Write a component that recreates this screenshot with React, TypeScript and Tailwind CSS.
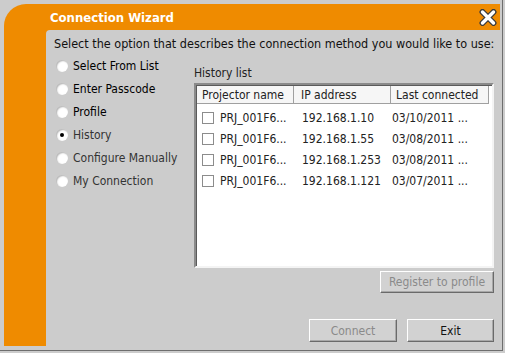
import React from "react";

const font = { fontFamily: '"DejaVu Sans Condensed", "DejaVu Sans", sans-serif' };

function Radio({ checked }: { checked?: boolean }) {
  return (
    <div className="w-[12px] h-[12px] rounded-full bg-white shadow-[inset_1px_1px_1.5px_rgba(0,0,0,0.3)] flex items-center justify-center">
      {checked && <div className="w-[4px] h-[4px] rounded-full bg-black" />}
    </div>
  );
}

function Check() {
  return <div className="w-[12px] h-[12px] border border-[#8c8c8c] bg-white shrink-0" />;
}

const radios = [
  { label: "Select From List", dark: true },
  { label: "Enter Passcode", dark: true },
  { label: "Profile", dark: true },
  { label: "History", checked: true },
  { label: "Configure Manually" },
  { label: "My Connection" },
];

const rows = [
  ["PRJ_001F6...", "192.168.1.10", "03/10/2011 ..."],
  ["PRJ_001F6...", "192.168.1.55", "03/08/2011 ..."],
  ["PRJ_001F6...", "192.168.1.253", "03/08/2011 ..."],
  ["PRJ_001F6...", "192.168.1.121", "03/07/2011 ..."],
];

function Btn({ children, disabled, w }: { children: React.ReactNode; disabled?: boolean; w: string }) {
  return (
    <div
      className={`${w} h-full flex items-center justify-center bg-[#d2d2d2] border border-t-white border-l-white border-r-[#6a6a6a] border-b-[#6a6a6a] shadow-[inset_-1px_-1px_0_#a8a8a8] text-[12px] ${disabled ? "text-[#8a8a8a]" : "text-[#111]"}`}
    >
      {children}
    </div>
  );
}

export default function App() {
  return (
    <div className="w-[505px] h-[353px] bg-[#cccccc] overflow-hidden" style={font}>
      <div className="w-[503px] h-[351px] border-r border-b border-[#6e6e6e] pt-[4px] pl-[4px]">
        <div className="w-[496px] h-[342px] bg-[#ef8b00] rounded-tl-[22px] flex flex-col">
          <div className="h-[26px] shrink-0 flex items-center pl-[46px] pr-[3px]">
            <span className="text-white font-bold text-[13px] leading-none flex-1">Connection Wizard</span>
            <svg width="18" height="17" viewBox="0 0 18 17">
              <path d="M3.5 3 L14.5 14 M14.5 3 L3.5 14" stroke="#3a3a3a" strokeWidth="6" strokeLinecap="round" />
              <path d="M3.5 3 L14.5 14 M14.5 3 L3.5 14" stroke="#ffffff" strokeWidth="3.4" strokeLinecap="round" />
            </svg>
          </div>
          <div className="flex-1 flex">
            <div className="w-[42px] shrink-0" />
            <div className="flex-1 bg-[#cccccc] rounded-tl-[4px] mb-[-4px] pl-[8px] flex flex-col">
              <div className="mt-[7px] h-[14px] text-[12.5px] leading-[14px] text-[#111] whitespace-nowrap">
                Select the option that describes the connection method you would like to use:
              </div>
              <div className="flex mt-[3px]">
                <div className="w-[140px] shrink-0 flex flex-col">
                  {radios.map((r) => (
                    <div key={r.label} className="h-[23px] flex items-center pl-[2px] gap-[5px]">
                      <Radio checked={r.checked} />
                      <span className={`text-[12px] leading-none ${r.dark ? "text-black" : "text-[#333]"}`}>{r.label}</span>
                    </div>
                  ))}
                </div>
                <div className="flex flex-col w-[300px]">
                  <div className="mt-[12px] h-[14px] text-[12px] leading-[14px] text-[#222]">History list</div>
                  <div className="mt-[3px] h-[185px] bg-white border-2 border-t-[#8a8a8a] border-l-[#8a8a8a] border-r-[#f4f4f4] border-b-[#f4f4f4] shadow-[inset_1px_1px_0_#5a5a5a]">
                    <div className="flex h-[18px] mt-[1px] ml-[1px] text-[12px] text-[#222]">
                      <div className="w-[97px] h-full bg-[#f6f6f6] border-r border-b border-[#a0a0a0] flex items-center pl-[5px]">Projector name</div>
                      <div className="w-[97px] h-full bg-[#f6f6f6] border-r border-b border-[#a0a0a0] flex items-center pl-[7px]">IP address</div>
                      <div className="w-[98px] h-full bg-[#f6f6f6] border-r border-b border-[#a0a0a0] flex items-center pl-[5px]">Last connected</div>
                    </div>
                    <div className="pt-[3px] text-[12px] text-[#222]">
                      {rows.map((r, i) => (
                        <div key={i} className="h-[21px] flex items-center">
                          <div className="w-[98px] flex items-center pl-[6px] gap-[6px] whitespace-nowrap">
                            <Check />
                            <span>{r[0]}</span>
                          </div>
                          <div className="w-[96px] pl-[8px] whitespace-nowrap">{r[1]}</div>
                          <div className="pl-[2px] whitespace-nowrap">{r[2]}</div>
                        </div>
                      ))}
                    </div>
                  </div>
                  <div className="mt-[3px] h-[22px] flex justify-end">
                    <Btn w="w-[114px]" disabled>Register to profile</Btn>
                  </div>
                  <div className="mt-[26px] h-[23px] flex justify-end gap-[10px]">
                    <Btn w="w-[88px]" disabled>Connect</Btn>
                    <Btn w="w-[87px]">Exit</Btn>
                  </div>
                </div>
              </div>
            </div>
          </div>
        </div>
      </div>
    </div>
  );
}
